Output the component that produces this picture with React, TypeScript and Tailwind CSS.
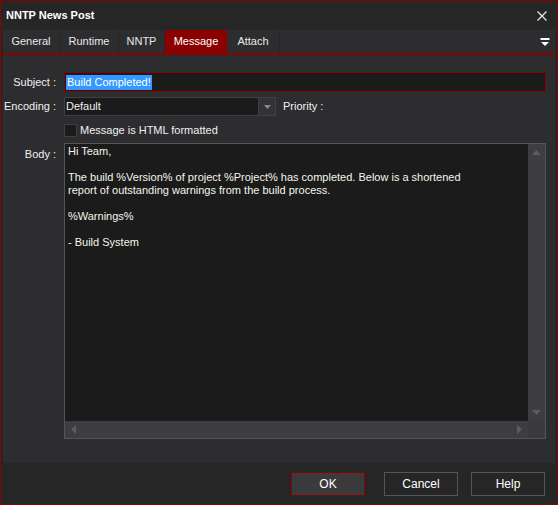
import React from "react";

const tabs = ["General", "Runtime", "NNTP", "Message", "Attach"];
const tabWidths = [57, 59, 46, 62, 53];

const bodyLines = [
  "Hi Team,",
  "",
  "The build %Version% of project %Project% has completed. Below is a shortened",
  "report of outstanding warnings from the build process.",
  "",
  "%Warnings%",
  "",
  "- Build System",
];

export default function App() {
  return (
    <div
      className="w-[558px] h-[505px] border border-[#8b0000] bg-[#262626] flex flex-col text-[11px] text-[#f0f0f0] select-none"
      style={{ fontFamily: '"Liberation Sans", Arial, sans-serif' }}
    >
      {/* Title bar */}
      <div className="h-[29px] flex items-center justify-between pl-[5px] pr-[9px] shrink-0">
        <span className="font-bold text-[11px] text-white">NNTP News Post</span>
        <svg width="12" height="12" viewBox="0 0 12 12">
          <path d="M1.5 1.5 L10.5 10.5 M10.5 1.5 L1.5 10.5" stroke="#e6e6e6" strokeWidth="1.3" />
        </svg>
      </div>

      {/* Tab strip */}
      <div className="mx-[2px] h-[25px] bg-[#2d2d30] border-b-2 border-[#8b0000] flex items-stretch shrink-0">
        {tabs.map((t, i) => (
          <div
            key={t}
            className={
              t === "Message"
                ? "flex items-center justify-center bg-[#8b0000] text-white text-[11px]"
                : "flex items-center justify-center border-r border-[#252526] text-[#e8e8e8] text-[11px]"
            }
            style={{ width: tabWidths[i] }}
          >
            {t}
          </div>
        ))}
        <div className="flex-1" />
        <div className="flex items-center pr-[5px]">
          <svg width="10" height="10" viewBox="0 0 10 10">
            <rect x="0.5" y="1" width="9" height="2" fill="#ffffff" />
            <path d="M1 5 L9 5 L5 9 Z" fill="#ffffff" />
          </svg>
        </div>
      </div>

      {/* Content panel */}
      <div className="mx-[2px] flex-1 bg-[#2d2d30] pt-[17px] pr-[9px] flex flex-col text-[11px]">
        {/* Subject */}
        <div className="flex items-center h-[20px]">
          <div className="w-[54px] text-right pr-[1px] whitespace-nowrap">Subject :</div>
          <div className="ml-[7px] flex-1 h-[20px] bg-[#1b1b1b] border border-[#8b0000] flex items-center pl-[1px]">
            <span className="bg-[#3399ff] text-white leading-[15px] px-[1px]">Build Completed!</span>
          </div>
        </div>

        {/* Encoding */}
        <div className="flex items-center h-[19px] mt-[5px]">
          <div className="w-[54px] text-right pr-[1px] whitespace-nowrap">Encoding :</div>
          <div className="ml-[7px] w-[212px] h-[19px] bg-[#1b1b1b] border border-[#3f3f46] flex items-stretch">
            <div className="flex-1 flex items-center pl-[1px]">Default</div>
            <div className="w-[17px] bg-[#333337] border-l border-[#3f3f46] flex items-center justify-center">
              <svg width="7" height="4" viewBox="0 0 7 4">
                <path d="M0 0 L7 0 L3.5 4 Z" fill="#8a8a8a" />
              </svg>
            </div>
          </div>
          <div className="ml-[7px] whitespace-nowrap">Priority :</div>
        </div>

        {/* Checkbox */}
        <div className="flex items-center h-[13px] mt-[8px] ml-[61px]">
          <div className="w-[13px] h-[13px] bg-[#1b1b1b] border border-[#3f3f46]" />
          <span className="ml-[3px]">Message is HTML formatted</span>
        </div>

        {/* Body */}
        <div className="flex mt-[6px]">
          <div className="w-[54px] text-right pr-[1px] pt-[3px]">Body :</div>
          <div className="ml-[7px] flex-1 h-[296px] border border-[#555555] bg-[#1b1b1b] flex flex-col">
            <div className="flex flex-1">
              <div className="flex-1 pl-[3px] pt-[1px] text-[#f5f5ea] leading-[13px]">
                {bodyLines.map((l, i) => (
                  <div key={i} className="h-[13px] whitespace-pre">
                    {l}
                  </div>
                ))}
              </div>
              <div className="w-[17px] bg-[#3e3e42] flex flex-col justify-between items-center py-[6px]">
                <svg width="9" height="5" viewBox="0 0 9 5">
                  <path d="M0 5 L9 5 L4.5 0 Z" fill="#5c5c60" />
                </svg>
                <svg width="9" height="5" viewBox="0 0 9 5">
                  <path d="M0 0 L9 0 L4.5 5 Z" fill="#5c5c60" />
                </svg>
              </div>
            </div>
            <div className="h-[17px] flex">
              <div className="flex-1 bg-[#3e3e42] flex items-center justify-between px-[6px]">
                <svg width="5" height="9" viewBox="0 0 5 9">
                  <path d="M5 0 L5 9 L0 4.5 Z" fill="#5c5c60" />
                </svg>
                <svg width="5" height="9" viewBox="0 0 5 9">
                  <path d="M0 0 L0 9 L5 4.5 Z" fill="#5c5c60" />
                </svg>
              </div>
              <div className="w-[17px] bg-[#3a3a3e]" />
            </div>
          </div>
        </div>
      </div>

      {/* Footer */}
      <div className="h-[41px] shrink-0 flex items-center justify-end gap-[19px] pr-[12px] text-[12px]">
        <button className="w-[74px] h-[24px] bg-[#3a3a3a] border border-[#8b0000] text-white">OK</button>
        <div className="flex gap-[13px]">
          <button className="w-[74px] h-[24px] bg-[#262626] border border-[#555555] text-white">Cancel</button>
          <button className="w-[74px] h-[24px] bg-[#262626] border border-[#555555] text-white">Help</button>
        </div>
      </div>
    </div>
  );
}
